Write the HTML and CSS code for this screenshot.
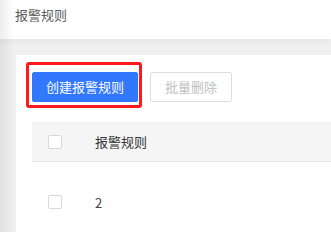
FILE: index.html
```html
<!DOCTYPE html>
<html lang="zh">
<head>
<meta charset="utf-8">
<link rel="stylesheet" href="styles.css">
</head>
<body>
<div class="page">
  <header class="topbar"><span class="title">报警规则</span></header>
  <main class="main">
    <section class="card">
      <div class="toolbar">
        <div class="btn-wrap">
          <button class="btn btn-primary">创建报警规则</button>
          <span class="highlight"></span>
        </div>
        <button class="btn btn-disabled">批量删除</button>
      </div>
      <div class="table">
        <div class="row head">
          <div class="cell check"><span class="checkbox"></span></div>
          <div class="cell">报警规则</div>
        </div>
        <div class="row body">
          <div class="cell check"><span class="checkbox"></span></div>
          <div class="cell">2</div>
        </div>
      </div>
    </section>
  </main>
  <div class="side-shadow"></div>
</div>
</body>
</html>
```
FILE: styles.css
```css
* { box-sizing: border-box; }
html, body { margin: 0; padding: 0; }
body {
  background: #f0f0f0;
  font-family: "Noto Sans CJK SC", "Noto Sans", sans-serif;
  font-size: 13px;
  overflow: hidden;
}
.page { position: relative; height: 232px; overflow: hidden; }
.topbar {
  height: 39px;
  background: #fff;
  padding: 5px 0 0 15px;
  box-shadow: 0 2px 6px rgba(0,0,0,0.05);
  position: relative;
  z-index: 1;
}
.title { color: #5a5a5a; font-size: 13px; line-height: 20px; }
.main { padding: 16px 0 0 16px; }
.card {
  background: #fff;
  padding: 17px 0 0 16px;
}
.toolbar { display: flex; gap: 12px; align-items: center; }
.btn-wrap { position: relative; display: flex; }
.btn {
  height: 30px;
  padding: 0 14px;
  border-radius: 2px;
  font-family: inherit;
  font-size: 13px;
  line-height: 28px;
  border: 1px solid transparent;
}
.btn-primary { background: #3178ff; border-color: #3178ff; color: #fff; padding: 0 13px; width: 106px; }
.btn-disabled { background: #fff; border-color: #dedede; color: #c0c0c0; }
.highlight {
  position: absolute;
  left: -6px; top: -10px; right: -4px; bottom: -6px;
  border: 3px solid #ff1a1a;
  border-radius: 3px;
}
.table { margin-top: 20px; }
.row { display: grid; grid-template-columns: 63px 1fr; align-items: center; }
.head { height: 40px; background: #f5f5f5; border-bottom: 1px solid #e6e6e6; color: #333; }
.body { height: 80px; color: #444; }
.check { padding-left: 16px; display: flex; align-items: center; }
.checkbox {
  width: 14px; height: 14px;
  border: 1px solid #d9d9d9;
  border-radius: 2px;
  background: #fff;
  display: block;
}
.side-shadow {
  position: absolute;
  left: 0; top: 0; bottom: 0;
  width: 14px;
  background: linear-gradient(to right, rgba(0,0,0,0.07), rgba(0,0,0,0));
  z-index: 2;
  pointer-events: none;
}
```
